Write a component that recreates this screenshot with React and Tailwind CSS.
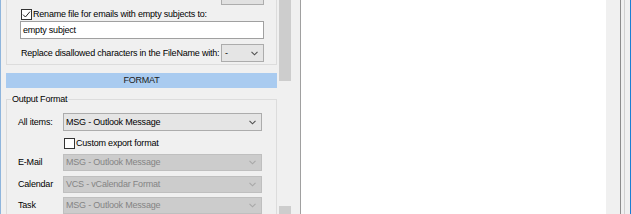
import React from 'react';

// small drop arrow used by all combo boxes
const Chevron = ({ disabled }) => (
  <svg width="7" height="5" viewBox="0 0 7 5" className="shrink-0">
    <polyline
      points="0.5,0.8 3.5,3.8 6.5,0.8"
      fill="none"
      stroke={disabled ? '#a8a8a8' : '#505050'}
      strokeWidth="1.1"
    />
  </svg>
);

const Combo = ({ value, disabled, className = '' }) => (
  <div
    className={`flex items-center justify-between pl-[2px] pr-[5px] border ${
      disabled
        ? 'h-[17px] bg-[#cccccc] border-[#bfbfbf] text-[#848484]'
        : 'h-[18px] bg-[#e5e5e5] border-[#acacac] text-black'
    } ${className}`}
  >
    <span>{value}</span>
    <Chevron disabled={disabled} />
  </div>
);

const Check = ({ checked }) => (
  <div className="w-[11px] h-[11px] border border-[#333333] bg-white flex items-center justify-center shrink-0">
    {checked && (
      <svg width="9" height="9" viewBox="0 0 9 9">
        <polyline points="1,4.6 3.4,7 8,1.6" fill="none" stroke="#222222" strokeWidth="1" />
      </svg>
    )}
  </div>
);

export default function App() {
  return (
    <div className="w-[631px] h-[214px] overflow-hidden flex bg-[#f0f0f0] font-['Liberation_Sans',Arial,sans-serif] text-[9px] tracking-[-0.2px] leading-none text-black select-none">
      {/* window edge */}
      <div className="w-px shrink-0 bg-[#8fb5dc]" />

      {/* Options panel */}
      <div className="w-[276px] shrink-0 flex flex-col">
        {/* File name group (scrolled, top cut off) */}
        <div className="ml-[5px] w-[271px] h-[65px] shrink-0 border-x border-b border-[#dcdcdc] flex flex-col">
          <div className="ml-[214px] w-[43px] h-[5px] border-x border-b border-[#adadad] bg-[#e1e1e1]" />
          <div className="mt-[3px] h-[12px] pl-[14px] flex items-center gap-[1px]">
            <Check checked />
            <span>Rename file for emails with empty subjects to:</span>
          </div>
          <div className="mt-[1px] ml-[13px] w-[244px] h-[18px] border border-[#a0a0a0] bg-white pl-[2px] flex items-center">
            empty subject
          </div>
          <div className="mt-[5px] h-[18px] pl-[14px] pr-[12px] flex items-center justify-between">
            <span>Replace disallowed characters in the FileName with:</span>
            <Combo value="-" className="w-[43px] pl-[3px]" />
          </div>
        </div>

        {/* section header */}
        <div className="mt-[8px] ml-[5px] w-[271px] h-[15px] shrink-0 bg-[#a9cbf0] flex items-center justify-center text-[#1b1b1b]">
          FORMAT
        </div>

        {/* Output format group */}
        <fieldset className="mt-[5px] ml-[5px] w-[271px] h-[150px] shrink-0 border border-[#dcdcdc]">
          <legend className="ml-[4px] px-[1px] leading-[12px]">Output Format</legend>
          <div className="mt-[8px] pl-[11px] flex items-center">
            <span className="w-[45px]">All items:</span>
            <Combo value="MSG - Outlook Message" className="w-[199px]" />
          </div>
          <div className="mt-[7px] h-[11px] pl-[57px] flex items-center gap-[1px]">
            <Check />
            <span>Custom export format</span>
          </div>
          <div className="mt-[5px] pl-[11px] flex items-center">
            <span className="w-[45px]">E-Mail</span>
            <Combo disabled value="MSG - Outlook Message" className="w-[199px]" />
          </div>
          <div className="mt-[5px] pl-[11px] flex items-center">
            <span className="w-[45px]">Calendar</span>
            <Combo disabled value="VCS - vCalendar Format" className="w-[199px]" />
          </div>
          <div className="mt-[4px] pl-[11px] flex items-center">
            <span className="w-[45px]">Task</span>
            <Combo disabled value="MSG - Outlook Message" className="w-[199px]" />
          </div>
        </fieldset>
      </div>

      {/* scrollbar */}
      <div className="w-[23px] shrink-0 flex flex-col justify-between">
        <div className="ml-[2px] w-[12px] h-[81px] bg-[#cdcdcd]" />
        <div className="ml-[2px] w-[12px] h-[8px] bg-[#cdcdcd]" />
      </div>

      <div className="w-px shrink-0 bg-[#a0a0a0]" />
      {/* preview area */}
      <div className="w-[305px] shrink-0 bg-white" />
      <div className="w-[14px] shrink-0" />
      <div className="w-px shrink-0 bg-[#8c8c8c]" />
      <div className="w-[3px] shrink-0" />
      <div className="w-px shrink-0 bg-[#d0d0d0]" />
      <div className="w-[5px] shrink-0" />
      <div className="w-px shrink-0 bg-[#1a7fd4]" />
    </div>
  );
}
